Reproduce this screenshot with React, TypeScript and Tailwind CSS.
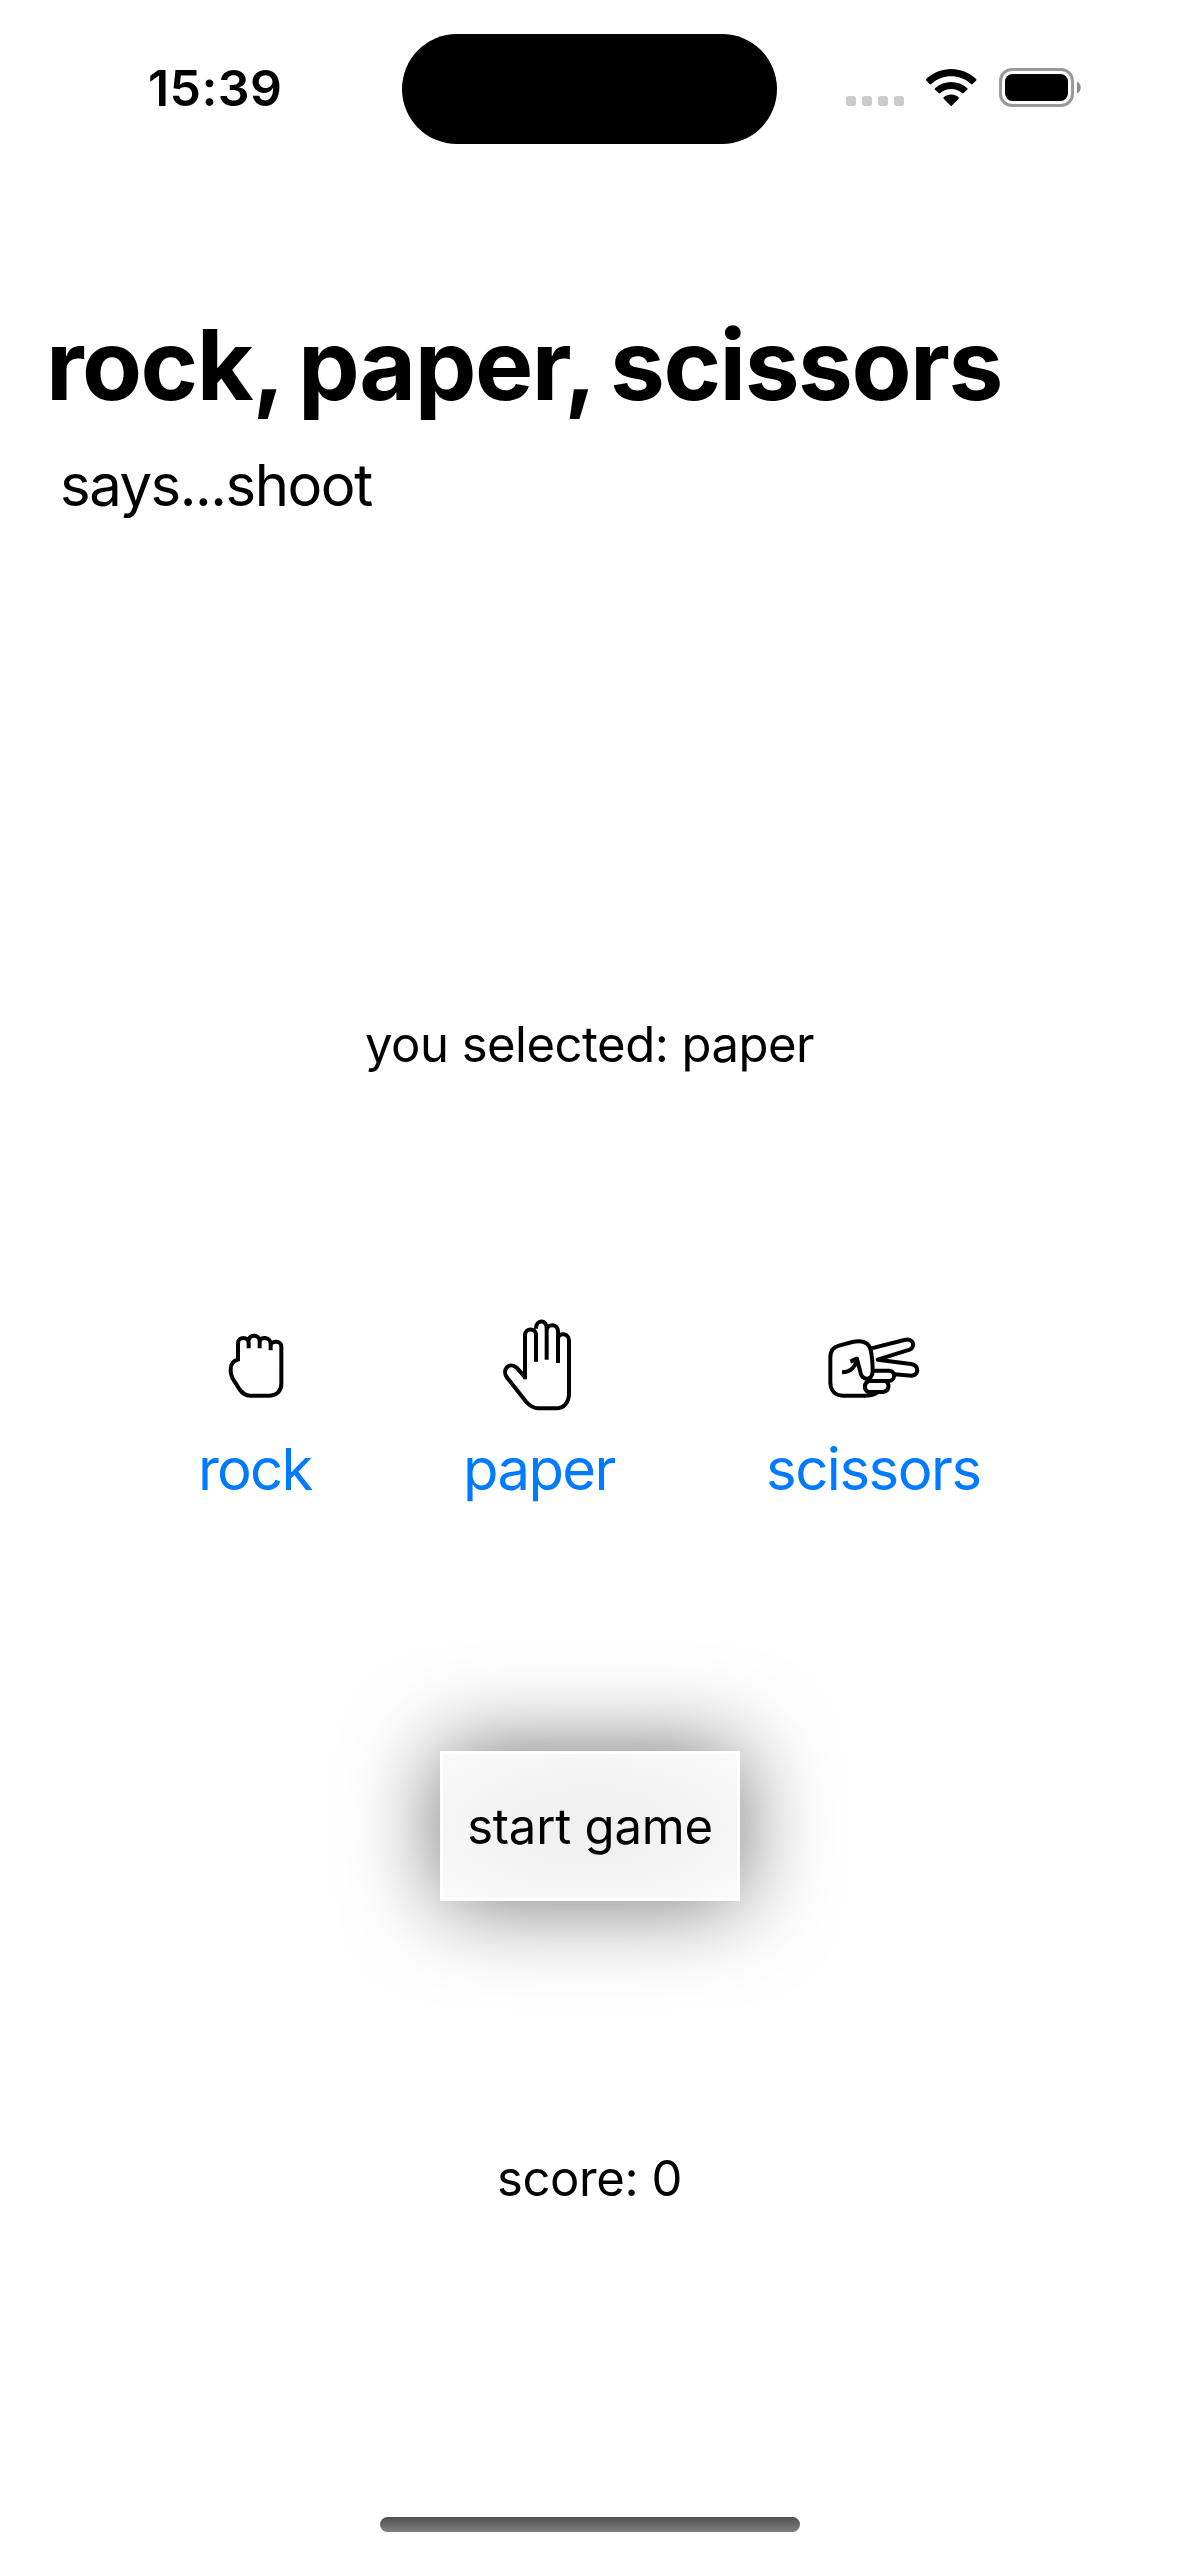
import type { ReactNode } from "react";

function StatusBar() {
  return (
    <header className="flex h-[177px] items-start">
      <time className="mt-[58px] ml-[148px] w-[254px] text-[50px] leading-[60px] font-semibold tracking-[0.4px]">
        15:39
      </time>
      <div className="mt-[33.5px] h-[110.5px] w-[375px] rounded-full bg-black" />
      <div className="mt-[96px] ml-[69px] flex gap-[6px]">
        <i className="size-[10px] rounded-[3px] bg-[#cbcbcb]" />
        <i className="size-[10px] rounded-[3px] bg-[#cbcbcb]" />
        <i className="size-[10px] rounded-[3px] bg-[#cbcbcb]" />
        <i className="size-[10px] rounded-[3px] bg-[#cbcbcb]" />
      </div>
      <svg className="mt-[68px] ml-[22px] h-[39px] w-[51px]" viewBox="0 0 153 117">
        <path d="M0 34C43-7 108-7 151 34Q152 36 150 38L139 49Q137 50 135 48C101 17 50 17 16 48Q14 50 12 49L1 38Q-1 36 0 34Z" />
        <path d="M27 61C54 36 97 36 124 61Q126 63 124 65L112 76Q110 77 108 75C89 59 62 59 43 75Q41 77 39 76L27 65Q25 63 27 61Z" />
        <path d="M53 88C66 77 85 77 98 88Q99 90 98 92L77 113Q75.500 115 74 113L53 92Q52 90 53 88Z" />
      </svg>
      <svg className="mt-[68px] ml-[22px] h-[39px] w-[83px]" viewBox="0 0 83 39">
        <rect x="1.500" y="1.500" width="72" height="36" rx="11.500" fill="none" stroke="#999" strokeWidth="3" />
        <rect x="6" y="6" width="63" height="27" rx="7.500" />
        <path d="M78 13.500C83 15.500 83 23.500 78 25.500Z" fill="#8c8c8c" />
      </svg>
    </header>
  );
}

function RockIcon() {
  return (
    <svg className="mt-[10px] ml-[12px] h-[110px] w-[100px]" viewBox="0 0 300 330" fill="none" stroke="#000" strokeWidth="12">
      <path d="M84 149C70 151 62 163 62 180C62 195 66 204 72 212L88 237C97 250 108 257 120 257H176C200 257 214 242 214 222V110C214 91 185 91 181 106M84 154V99C84 79 116 79 116 99V115M116 92C116 72 149 72 149 94V115M149 96C149 78 182 80 182 102V121" />
    </svg>
  );
}

function PaperIcon() {
  return (
    <svg className="ml-[27px] h-[130px] w-[100px]" viewBox="0 0 300 390" fill="none" stroke="#000" strokeWidth="12">
      <path d="M105 238V105C105 83 138 83 138 103V185M138 86C138 58 170 58 170 84V179M170 90C172 70 204 70 204 94V189M204 114C206 98 237 98 237 122V280C237 310 220 325 198 325H145C130 325 120 318 109 306L52 234C33 210 58 184 80 203L106 233" />
    </svg>
  );
}

function ScissorsIcon() {
  return (
    <svg className="mt-[20px] ml-[49px] h-[100px] w-[120px]" viewBox="0 0 360 300" fill="none" stroke="#000" strokeWidth="12" strokeLinejoin="round">
      <path d="M186 218C176 224 166 227 150 227H85C60 227 46 211 46 186V113C46 91 56 81 72 77L112 66C142 59 162 68 167 90C171 108 173 130 173 154C173 168 165 176 157 176C147 176 140 170 137 160L126 116C122 140 106 157 81 157M127 115L106 125" />
      <path d="M166 86L268 60C296 52 302 81 284 89L188 119L288 132C313 137 312 165 290 167L238 163" />
      <path d="M175 152H222C243 152 242 182 222 183H162C146 188 146 210 160 216H204C224 214 224 190 213 184" />
    </svg>
  );
}

function Choice({ icon, label, className }: { icon: ReactNode; label: string; className: string }) {
  return (
    <button className={className}>
      <div className="flex h-[133px] items-start">{icon}</div>
      <div className="text-[58px] leading-[72px] whitespace-nowrap text-[#007aff]">{label}</div>
    </button>
  );
}

export default function App() {
  return (
    <div className="h-[2556px] w-[1179px] overflow-hidden bg-white font-['Inter',sans-serif] text-black">
      <StatusBar />
      <h1 className="mt-[127px] ml-[46px] text-[98px] leading-[122px] font-bold tracking-[-1.5px] [word-spacing:-4px] whitespace-nowrap">
        rock, paper, scissors
      </h1>
      <p className="mt-[23px] ml-[60px] text-[58px] leading-[72px] tracking-[-1.45px]">says...shoot</p>
      <p className="mt-[493px] text-center text-[49px] leading-[61px] tracking-[-0.5px]">you selected: paper</p>

      <div className="mt-[225px] flex">
        <Choice icon={<RockIcon />} label="rock" className="ml-[198px] w-[119px] text-left tracking-[-1.8px]" />
        <Choice icon={<PaperIcon />} label="paper" className="ml-[146px] w-[154px] text-left tracking-[-1.6px]" />
        <Choice icon={<ScissorsIcon />} label="scissors" className="ml-[149px] w-[217px] text-left tracking-[-1.45px]" />
      </div>

      <button className="mt-[246px] ml-[440px] block h-[150px] w-[300px] border-[3px] border-white bg-[radial-gradient(ellipse_at_center,#efefef_0%,#f3f3f3_45%,#fafafa_100%)] text-[49px] leading-[61px] tracking-[-0.2px] whitespace-nowrap shadow-[0_0_92px_rgba(0,0,0,0.57)]">
        start game
      </button>

      <p className="mt-[247px] text-center text-[49px] leading-[61px] tracking-[-0.4px]">score: 0</p>
      <div className="mt-[308px] ml-[380px] h-[15px] w-[420px] rounded-full bg-linear-to-b from-[#505050] to-[#808080]" />
    </div>
  );
}
